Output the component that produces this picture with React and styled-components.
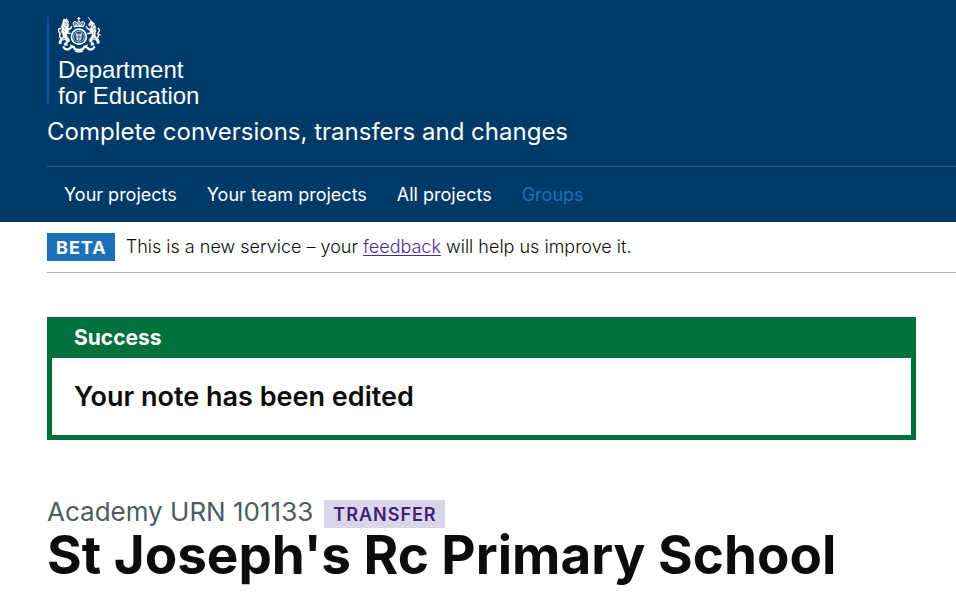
import React from "react";
import styled, { createGlobalStyle } from "styled-components";

const GlobalStyle = createGlobalStyle`
  * { box-sizing: border-box; }
  body { margin: 0; background: #fff; color: #0b0c0c; font-family: Inter, "Liberation Sans", sans-serif; }
  h1, h2, p, ul { margin: 0; padding: 0; font: inherit; }
`;

const Header = styled.header`
  background: #003a69;
  padding: 17px 0 0 47px;
  color: #fff;
`;

const Logo = styled.a`
  display: flex;
  flex-direction: column;
  width: max-content;
  padding-left: 9px;
  border-left: 2px solid #0056a5;
  color: #fff;
  text-decoration: none;
  font: 24px/26px "Liberation Sans", Arial, sans-serif;
`;

const CrestIcon = styled.svg`
  display: block;
  width: 43px;
  height: 36px;
  margin-bottom: 4px;
`;

const LogoLine = styled.span`
  display: block;
  height: ${(p) => (p.$last ? "22px" : "26px")};
`;

const ServiceName = styled.a`
  display: block;
  width: max-content;
  margin-top: 12px;
  color: #fff;
  text-decoration: none;
  font-size: 24px;
  line-height: 30px;
`;

const Nav = styled.nav`
  margin-top: 19px;
  border-top: 1px solid #335f86;
`;

const NavList = styled.ul`
  display: flex;
  gap: 30px;
  padding: 16px 0 15px 17px;
  list-style: none;
`;

const NavLink = styled.a`
  display: block;
  color: ${(p) => (p.$current ? "#1d70b8" : "#fff")};
  text-decoration: none;
  font-size: 18px;
  line-height: 24px;
`;

const Main = styled.main`
  padding: 44px 40px 24px 47px;
`;

const PhaseBanner = styled.div`
  display: flex;
  align-items: center;
  gap: 11px;
  margin-left: 47px;
  padding: 11px 0;
  border-bottom: 1px solid #b1b4b6;
  font-size: 18px;
  line-height: 28px;
`;

const Tag = styled.strong`
  padding: 2px 8px 0 9px;
  background: ${(p) => (p.$tone === "purple" ? "#dbd5e9" : "#1d70b8")};
  color: ${(p) => (p.$tone === "purple" ? "#3d2375" : "#fff")};
  font-size: 18px;
  font-weight: ${(p) => (p.$tone === "purple" ? 600 : 700)};
  line-height: 26px;
  letter-spacing: 1px;
`;

const PhaseText = styled.p`
  font-weight: 300;
`;

const TextLink = styled.a`
  color: #4c2c92;
  text-decoration-thickness: 1px;
  text-underline-offset: 2px;
`;

const Notice = styled.section`
  border: 5px solid #00703c;
  background: #00703c;
`;

const NoticeTitle = styled.h2`
  padding: 3px 22px 7px;
  color: #fff;
  font-size: 21px;
  font-weight: 700;
  line-height: 26px;
`;

const NoticeBody = styled.p`
  padding: 22px;
  background: #fff;
  font-size: 27px;
  font-weight: 600;
  line-height: 33px;
`;

const CaptionRow = styled.div`
  display: flex;
  align-items: flex-end;
  gap: 11px;
  margin-top: 56px;
`;

const Caption = styled.span`
  color: #505a5f;
  font-size: 26px;
  font-weight: 400;
  line-height: 32px;
`;

const PageTitle = styled.h1`
  font-size: 53px;
  font-weight: 700;
  line-height: 55px;
`;

function Crest() {
  return (
    <CrestIcon viewBox="0 0 43 36" fill="none" stroke="#fff" strokeLinecap="round" strokeLinejoin="round" aria-hidden="true">
      {/* crown */}
      <path d="M16.3 9.4 15 6q.8-2.2 3.2-1.1l1.1 1.5 1.6-2.9 1.6 2.9 1.1-1.5Q26 3.8 26.8 6l-1.3 3.4q-4.600-1.200-9.200 0Z" fill="#fff" fillOpacity=".35" strokeWidth="1" />
      <path d="M20.900.4v2.700M19.800 1.500H22M16.600 9.700q4.300-1.200 8.600 0M18.200 7.500h.1M20.900 7.200h.1M23.500 7.500h.1" strokeWidth="1.200" />
      {/* garter and shield */}
      <circle cx="20.900" cy="19.700" r="7.500" strokeWidth="1.700" />
      <circle cx="20.900" cy="19.700" r="5.300" strokeWidth=".8" strokeDasharray="1 .7" />
      <path d="M17.700 16.400h6.400v4.200q-.4 2.600-3.200 3.700-2.800-1.100-3.200-3.700Z" fill="#fff" fillOpacity=".8" stroke="none" />
      <path d="M20.900 16.600v7M17.900 20h6" stroke="#003a69" strokeWidth=".6" />
      {/* lion */}
      <path d="m5 4 .8-2.200 1.500.8L8.600 1.500l.8 1.600 1.200 1.900-.5 1.700.8 1.900-1 1.400.9 2.100-.3 2.700-2 2.400.8 2.400 2.300 3-.3 1.800-2.500 2 .9 2H6.500l-.5-1.400 2.300-2.300-1-2.200-2.800.7-1.300 2 .3 1.300-2 .4-.7-1.400 1.400-3.400 3-2.200-.6-3-1.400-2.100.8-2.900-.9-2.200.9-1.800Z" fill="#fff" strokeWidth=".5" />
      <path d="m9.600 12.700 3.100-1.400.9-1.600M9.400 16l2.600.4M3.600 21.500Q1.200 20.500 1.800 18q.7-1.500-.3-2.600-1.400-.9-.9-2.600.4-1.600 1.700-1.300" strokeWidth="1.500" />
      <path d="m6.600 5.800 1.200.3M9 5.600h.6M7.200 8l1.800.2M6 10.500l1.400 1.200M5.800 13.700l1.200 1M4.800 22l2-.8" stroke="#003a69" strokeWidth=".6" />
      {/* unicorn */}
      <path d="m30.300.5 2.600 4.300.9-1 .7 1.500 1.900 1 .2 1.900 1.200 1.900-.6 1.900.9 2.100-1.100 3.200.7 2.200 2.500 2.200 1.500 3.700-.8 1.200-2-.3.2-1.300-1.400-2-2.700-.7-1.300 2.200 2.400 2.300-.5 1.500h-2.900l.9-2-2.400-2 .1-1.800 2.200-3 .6-2.400-2.200-2.500.1-2.600 1.500-3-.4-1-1.500.9-1.100-.7 1-2.600 1.400-1.100Z" fill="#fff" strokeWidth=".5" />
      <path d="m32.300 12.800-2.900-1.300-1.200-2M32.500 16.200l-2.700.3M38.600 21.300q2.300-.9 1.600-3.400-.8-1.600.4-2.600 1.400-1.100.6-2.800l-1-1.200M40.500 17.400l1.500.5" strokeWidth="1.400" />
      <path d="m32.800 7 .4.3M35.800 7.600l-1.500 3M36.500 11l-1.500 2M36.300 14.900l-1 1.500M35.200 21.200l2 .8" stroke="#003a69" strokeWidth=".6" />
      {/* motto ribbon */}
      <path d="M5.600 30.200q1.800 3.200 5.200 2l3.100-2.600q2.300-.1 2.600 2.300 4.400 2.200 8.800 0 .3-2.400 2.600-2.300l3.100 2.600q3.400 1.200 5.200-2" strokeWidth="2.300" />
      <path d="m12.500 28 3.200 1.800M29.300 28l-3.200 1.800M17.500 34.400q3.400 1 6.800 0" strokeWidth="1.300" />
    </CrestIcon>
  );
}

const links = ["Your projects", "Your team projects", "All projects", "Groups"];

export default function App() {
  return (
    <>
      <GlobalStyle />
      <Header>
        <Logo href="#">
          <Crest />
          <LogoLine>Department</LogoLine>
          <LogoLine $last>for Education</LogoLine>
        </Logo>
        <ServiceName href="#">Complete conversions, transfers and changes</ServiceName>
        <Nav aria-label="Primary">
          <NavList>
            {links.map((label) => (
              <li key={label}>
                <NavLink href="#" $current={label === "Groups"}>{label}</NavLink>
              </li>
            ))}
          </NavList>
        </Nav>
      </Header>
      <PhaseBanner>
        <Tag>BETA</Tag>
        <PhaseText>
          This is a new service – your <TextLink href="#">feedback</TextLink> will help us improve it.
        </PhaseText>
      </PhaseBanner>
      <Main>
        <Notice aria-labelledby="notice-title">
          <NoticeTitle id="notice-title">Success</NoticeTitle>
          <NoticeBody>Your note has been edited</NoticeBody>
        </Notice>
        <CaptionRow>
          <Caption>Academy URN 101133</Caption>
          <Tag $tone="purple">TRANSFER</Tag>
        </CaptionRow>
        <PageTitle>St Joseph's Rc Primary School</PageTitle>
      </Main>
    </>
  );
}
